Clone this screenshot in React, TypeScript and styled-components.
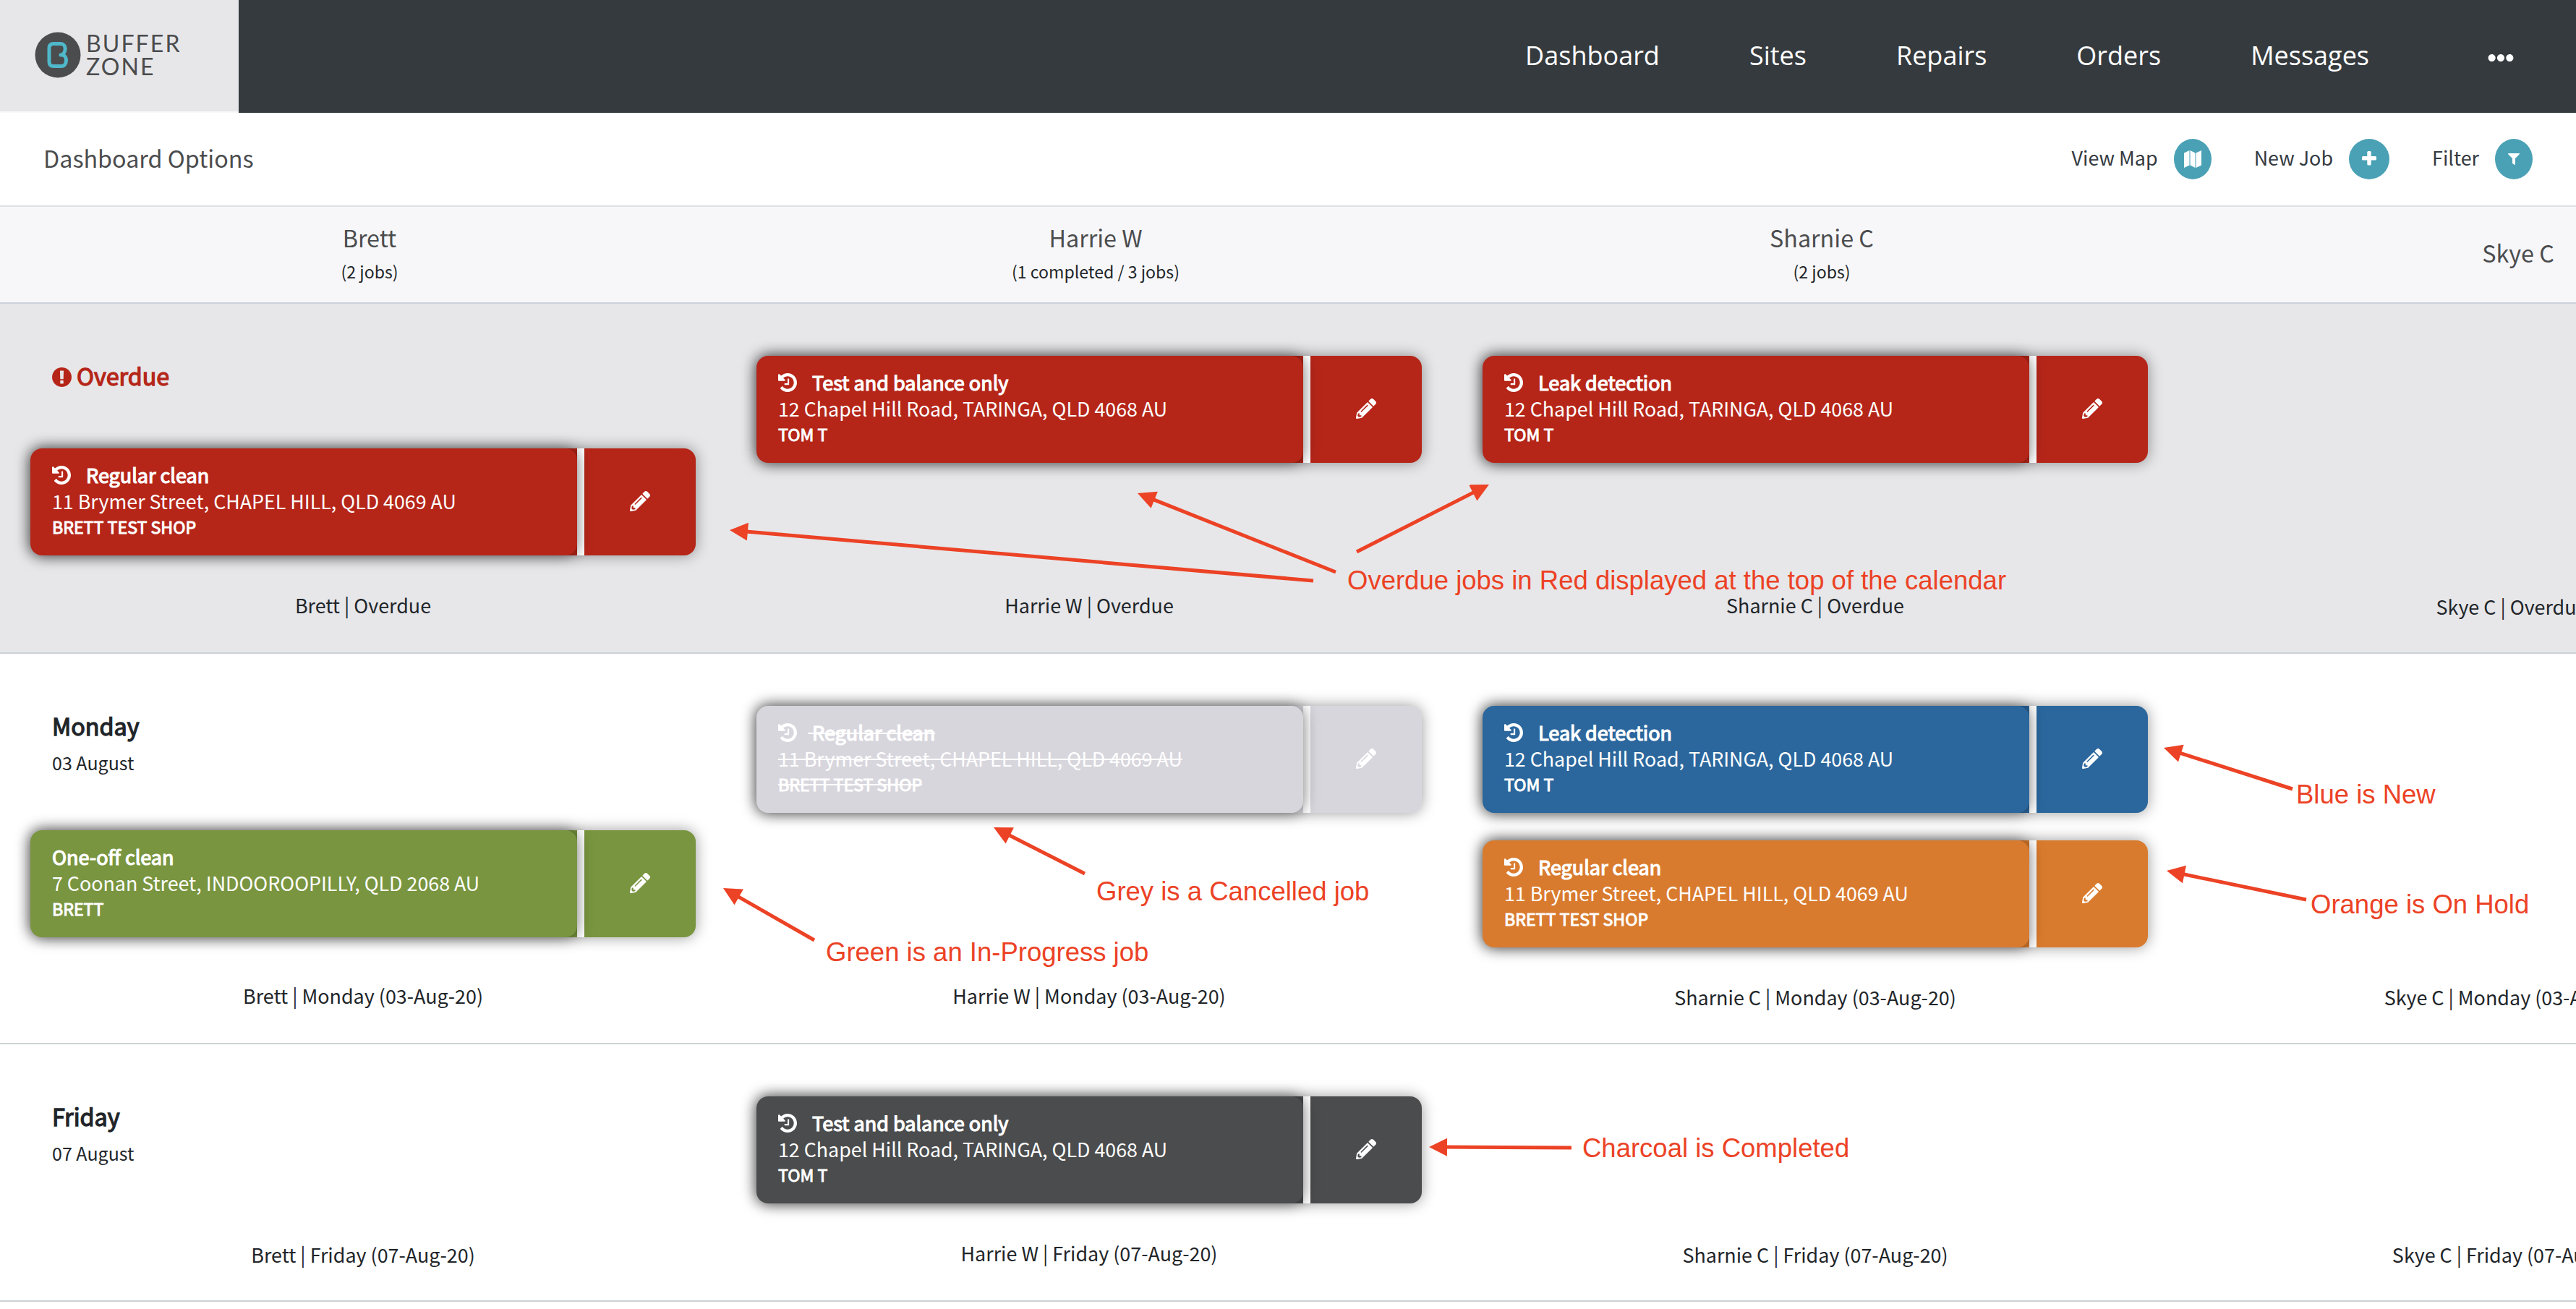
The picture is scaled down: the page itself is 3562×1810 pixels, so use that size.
import React from "react";
import styled, { createGlobalStyle } from "styled-components";
import { FaFilter, FaEllipsisH, FaPencilAlt } from "react-icons/fa";

type Status = "overdue" | "new" | "hold" | "progress" | "cancelled" | "completed";

interface Job {
  title: string;
  address: string;
  client: string;
  status: Status;
  recurring?: boolean;
}

interface DayCell {
  caption: string;
  jobs: Job[];
}

interface Day {
  name: string;
  date?: string;
  height: number;
  cells: DayCell[];
}

const colours: Record<Status, string> = {
  overdue: "#b52619",
  new: "#2b679d",
  hold: "#d97b2e",
  progress: "#79953f",
  cancelled: "#d8d6dd",
  completed: "#4b4c4d",
};

const GlobalStyle = createGlobalStyle`
  * {
    box-sizing: border-box;
  }
  body {
    margin: 0;
    background: #fff;
    color: #212529;
    font-family: "Noto Sans CJK SC", "Noto Sans", sans-serif;
    overflow: hidden;
  }
`;

const Page = styled.div`
  position: relative;
  width: 3562px;
  height: 1810px;
  overflow: hidden;
`;

const Header = styled.header`
  display: flex;
  align-items: center;
  height: 156px;
  background: #353a3e;
`;

const Brand = styled.div`
  display: flex;
  align-items: center;
  width: 330px;
  height: 156px;
  padding: 0 0 2px 48px;
  background: #e7e7e9;
  border-bottom: 2px solid #f8f8f8;
`;

const BrandName = styled.div`
  margin-left: 7px;
  color: #4b4c4e;
  font: 32px/32px Lato, sans-serif;
  letter-spacing: 2.1px;
`;

const Nav = styled.nav`
  display: flex;
  flex: 1;
  justify-content: flex-end;
  align-items: center;
  gap: 124px;
  padding-right: 86px;
`;

const NavLink = styled.a`
  padding-bottom: 2px;
  color: #fff;
  font: 36px/50px "Open Sans", sans-serif;
`;

const MoreIcon = styled(FaEllipsisH)`
  width: 36px;
  height: 36px;
  margin: 4px 0 0 40px;
  color: #fff;
`;

const Toolbar = styled.div`
  display: flex;
  align-items: center;
  justify-content: space-between;
  height: 130px;
  padding: 0 60px;
  border-bottom: 2px solid #dee2e6;
`;

const ToolbarTitle = styled.div`
  padding-bottom: 4px;
  color: #4b4c4e;
  font-size: 32.3px;
  line-height: 50px;
`;

const Actions = styled.div`
  display: flex;
  gap: 59px;
`;

const Action = styled.div`
  display: flex;
  align-items: center;
  gap: 22px;
`;

const ActionLabel = styled.span`
  padding-bottom: 5px;
  color: #343a40;
  font-size: 26.9px;
  line-height: 42px;
`;

const RoundButton = styled.span<{ $width: number }>`
  display: flex;
  align-items: center;
  justify-content: center;
  width: ${(props) => props.$width}px;
  height: 56px;
  border-radius: 50%;
  background: #4aa1b5;
  color: #fff;
`;

const People = styled.div`
  display: flex;
  height: 134px;
  padding-left: 9px;
  background: #f7f7f9;
  border-bottom: 2px solid #ced2d8;
`;

const Person = styled.div<{ $width: number }>`
  display: flex;
  flex: none;
  flex-direction: column;
  align-items: center;
  justify-content: center;
  width: ${(props) => props.$width}px;
  padding-bottom: 3px;
  color: #4b4c4e;
  font-size: 32.3px;
  line-height: 49px;

  &:last-child {
    padding-bottom: 6px;
  }
`;

const JobCount = styled.small`
  color: #212529;
  font-size: 23.1px;
  line-height: 45px;
`;

const DayRow = styled.section<{ $height: number; $overdue: boolean }>`
  display: flex;
  height: ${(props) => props.$height}px;
  background: ${(props) => (props.$overdue ? "#e7e7e9" : "#fff")};
  border-bottom: 2px solid #ced2d5;
`;

const Column = styled.div<{ $width: number }>`
  display: flex;
  flex: none;
  flex-direction: column;
  width: ${(props) => props.$width}px;
  padding: 72px 42px 40px;
`;

const DayLabel = styled.div<{ $overdue: boolean }>`
  display: flex;
  align-items: center;
  gap: 7px;
  height: 58px;
  margin-left: 30px;
  color: ${(props) => (props.$overdue ? "#b52619" : "#212529")};
  font-size: 32.3px;
  -webkit-text-stroke: 1.3px currentColor;

  span {
    padding-bottom: 5px;
  }
`;

const DateLabel = styled.div`
  height: 44px;
  margin-left: 30px;
  font-size: 25px;
  line-height: 41px;
`;

const Jobs = styled.div<{ $offset: number }>`
  display: flex;
  flex-direction: column;
  gap: 38px;
  margin-top: ${(props) => props.$offset}px;
`;

const Card = styled.article<{ $status: Status }>`
  display: flex;
  height: 148px;
  border-radius: 16px;
  background: ${(props) => colours[props.$status]};
  box-shadow: 0 0 20px rgba(0, 0, 0, 0.4);
  color: #fff;
`;

const CardBody = styled.div<{ $cancelled: boolean }>`
  position: relative;
  flex: 1;
  padding: 19px 30px 0;
  border-radius: 16px;
  box-shadow: 0 0 20px rgba(0, 0, 0, 0.55);
  text-decoration: ${(props) => (props.$cancelled ? "line-through 2px" : "none")};
`;

const CardTitle = styled.div`
  display: flex;
  align-items: center;
  gap: 15px;
  height: 36px;
  font-size: 27px;

  span {
    padding-bottom: 2px;
    -webkit-text-stroke: 1.2px currentColor;
  }
`;

const Address = styled.div`
  font-size: 26.8px;
  line-height: 36px;
`;

const Client = styled.div`
  font-size: 23.2px;
  line-height: 34px;
  -webkit-text-stroke: 1px currentColor;
`;

const EditButton = styled.div`
  display: flex;
  align-items: center;
  justify-content: center;
  width: 164px;
  padding-bottom: 2px;
  border-left: 10px solid #fff;
`;

const Caption = styled.div<{ $low: boolean }>`
  margin-top: auto;
  padding-bottom: ${(props) => (props.$low ? 2 : 4)}px;
  text-align: center;
  font-size: 26.9px;
  line-height: 42px;
  white-space: nowrap;
`;

const Notes = styled.div`
  position: absolute;
  inset: 0;
`;

const Arrows = styled.svg`
  position: absolute;
  inset: 0;
  fill: #ec4225;
  stroke: #ec4225;
`;

const Note = styled.div<{ $x: number; $y: number }>`
  position: absolute;
  left: ${(props) => props.$x}px;
  top: ${(props) => props.$y}px;
  color: #ec4225;
  font: 36.5px/42px "Liberation Sans", sans-serif;
  white-space: nowrap;
`;

const columnWidths = [1004, 1004, 1004, 922];

const people = [
  { name: "Brett", jobs: "(2 jobs)" },
  { name: "Harrie W", jobs: "(1 completed / 3 jobs)" },
  { name: "Sharnie C", jobs: "(2 jobs)" },
  { name: "Skye C" },
];

const brymer = { address: "11 Brymer Street, CHAPEL HILL, QLD 4069 AU", client: "BRETT TEST SHOP", recurring: true };
const chapel = { address: "12 Chapel Hill Road, TARINGA, QLD 4068 AU", client: "TOM T", recurring: true };

const days: Day[] = [
  {
    name: "Overdue",
    height: 484,
    cells: [
      { caption: "Brett | Overdue", jobs: [{ title: "Regular clean", status: "overdue", ...brymer }] },
      { caption: "Harrie W | Overdue", jobs: [{ title: "Test and balance only", status: "overdue", ...chapel }] },
      { caption: "Sharnie C | Overdue", jobs: [{ title: "Leak detection", status: "overdue", ...chapel }] },
      { caption: "Skye C | Overdue", jobs: [] },
    ],
  },
  {
    name: "Monday",
    date: "03 August",
    height: 540,
    cells: [
      {
        caption: "Brett | Monday (03-Aug-20)",
        jobs: [
          {
            title: "One-off clean",
            address: "7 Coonan Street, INDOOROOPILLY, QLD 2068 AU",
            client: "BRETT",
            status: "progress",
          },
        ],
      },
      { caption: "Harrie W | Monday (03-Aug-20)", jobs: [{ title: "Regular clean", status: "cancelled", ...brymer }] },
      {
        caption: "Sharnie C | Monday (03-Aug-20)",
        jobs: [
          { title: "Leak detection", status: "new", ...chapel },
          { title: "Regular clean", status: "hold", ...brymer },
        ],
      },
      { caption: "Skye C | Monday (03-Aug-20)", jobs: [] },
    ],
  },
  {
    name: "Friday",
    date: "07 August",
    height: 356,
    cells: [
      { caption: "Brett | Friday (07-Aug-20)", jobs: [] },
      { caption: "Harrie W | Friday (07-Aug-20)", jobs: [{ title: "Test and balance only", status: "completed", ...chapel }] },
      { caption: "Sharnie C | Friday (07-Aug-20)", jobs: [] },
      { caption: "Skye C | Friday (07-Aug-20)", jobs: [] },
    ],
  },
];

const notes = [
  { text: "Overdue jobs in Red displayed at the top of the calendar", x: 1863, y: 782 },
  { text: "Grey is a Cancelled job", x: 1516, y: 1212 },
  { text: "Green is an In-Progress job", x: 1142, y: 1296 },
  { text: "Blue is New", x: 3175, y: 1078 },
  { text: "Orange is On Hold", x: 3195, y: 1230 },
  { text: "Charcoal is Completed", x: 2188, y: 1567 },
];

// tail x, tail y, tip x, tip y
const arrows = [
  [1816, 803, 1009, 733],
  [1847, 791, 1573, 682],
  [1876, 763, 2059, 670],
  [1500, 1208, 1374, 1144],
  [1126, 1300, 1000, 1228],
  [3170, 1091, 2992, 1034],
  [3189, 1244, 2996, 1204],
  [2173, 1587, 1976, 1586],
];

const Arrow = ({ points }: { points: number[] }) => {
  const [x1, y1, x2, y2] = points;
  const angle = (Math.atan2(y2 - y1, x2 - x1) * 180) / Math.PI;
  const length = Math.hypot(x2 - x1, y2 - y1);
  return (
    <g transform={`translate(${x1} ${y1}) rotate(${angle})`}>
      <line x1={0} y1={0} x2={length - 20} y2={0} strokeWidth={5} />
      <path d={`M${length} 0l-25 -12.500v25z`} stroke="none" />
    </g>
  );
};

const HistoryIcon = () => (
  <svg width="26" height="26" viewBox="0 128 1536 1536" fill="currentColor">
    <path d="M1536 896q0 156-61 298t-164 245-245 164-298 61q-172 0-327-72.500t-264-204.500q-7-10-6.500-22.500t8.500-20.500l137-138q10-9 25-9 16 2 23 12 73 95 179 147t225 52q104 0 198.500-40.500t163.500-109.500 109.500-163.500 40.500-198.500-40.500-198.500-109.500-163.500-163.500-109.500-198.500-40.500q-98 0-188 35.500t-160 101.500l137 138q31 30 14 69-17 40-59 40h-448q-26 0-45-19t-19-45v-448q0-42 40-59 39-17 69 14l130 129q107-101 244.500-156.500t284.500-55.500q156 0 298 61t245 164 164 245 61 298zm-640-288v448q0 14-9 23t-23 9h-320q-14 0-23-9t-9-23v-64q0-14 9-23t23-9h224v-352q0-14 9-23t23-9h64q14 0 23 9t9 23z" />
  </svg>
);

const AlertIcon = () => (
  <svg width="27" height="27" viewBox="128 128 1536 1536" fill="currentColor" stroke="none">
    <path d="M896 128q209 0 385.500 103t279.500 279.500 103 385.500-103 385.500-279.500 279.500-385.500 103-385.500-103-279.500-279.500-103-385.500 103-385.500 279.500-279.500 385.500-103zm128 1247v-190q0-14-9-23.500t-22-9.500h-192q-13 0-23 10t-10 23v190q0 13 10 23t23 10h192q13 0 22-9.500t9-23.500zm-2-344l18-621q0-12-10-18-10-8-24-8h-220q-14 0-24 8-10 6-10 18l17 621q0 10 10 17.500t24 7.500h185q14 0 23.500-7.500t10.500-17.500z" />
  </svg>
);

const MapIcon = () => (
  <svg width="24" height="24" viewBox="0 0 24 24" fill="currentColor">
    <path d="M0 3.500L7.500 0v20.500L0 24zM8.500 0l7 3.500V24l-7-3.500zM16.500 3.500L24 0v20.500L16.500 24z" />
  </svg>
);

const PlusIcon = () => (
  <svg width="20" height="22" viewBox="0 0 20 22" fill="currentColor">
    <rect x="7.300" y="0" width="5.400" height="19.500" rx="1.500" />
    <rect x="0" y="7" width="20" height="5.400" rx="1.500" />
  </svg>
);

const JobCard = ({ job }: { job: Job }) => (
  <Card $status={job.status}>
    <CardBody $cancelled={job.status === "cancelled"}>
      <CardTitle>
        {job.recurring && <HistoryIcon />}
        <span>
          {job.recurring && "\u00a0"}
          {job.title}
        </span>
      </CardTitle>
      <Address>{job.address}</Address>
      <Client>{job.client}</Client>
    </CardBody>
    <EditButton>
      <FaPencilAlt size={28} />
    </EditButton>
  </Card>
);

const App = () => {
  const renderDay = (day: Day) => {
    const overdue = day.name === "Overdue";
    return (
      <DayRow key={day.name} $height={day.height} $overdue={overdue}>
        {day.cells.map((cell, index) => (
          <Column key={cell.caption} $width={columnWidths[index]}>
            {index === 0 && (
              <DayLabel $overdue={overdue}>
                {overdue && <AlertIcon />}
                <span>{day.name}</span>
              </DayLabel>
            )}
            {index === 0 && day.date && <DateLabel>{day.date}</DateLabel>}
            <Jobs $offset={index === 0 ? 70 : 0}>
              {cell.jobs.map((job) => (
                <JobCard key={job.title} job={job} />
              ))}
            </Jobs>
            <Caption $low={cell.jobs.length !== 1}>{cell.caption}</Caption>
          </Column>
        ))}
      </DayRow>
    );
  };

  return (
    <>
      <GlobalStyle />
      <Page>
        <Header>
          <Brand>
            <svg width="64" height="64" viewBox="0 0 64 64">
              <circle cx="32" cy="32" r="31.500" fill="#4b4c4e" />
              <path
                d="M36 32H38C46 33 45 47.500 37 47.500H26Q20 47.500 20 41.500V22.500Q20 16.500 26 16.500H36C44 16.500 44 29 37 32"
                fill="none"
                stroke="#4fb8ca"
                strokeWidth="5"
                strokeLinecap="round"
              />
            </svg>
            <BrandName>
              BUFFER
              <br />
              ZONE
            </BrandName>
          </Brand>
          <Nav>
            <NavLink>Dashboard</NavLink>
            <NavLink>Sites</NavLink>
            <NavLink>Repairs</NavLink>
            <NavLink>Orders</NavLink>
            <NavLink>Messages</NavLink>
            <MoreIcon />
          </Nav>
        </Header>
        <Toolbar>
          <ToolbarTitle>Dashboard Options</ToolbarTitle>
          <Actions>
            <Action>
              <ActionLabel>View Map</ActionLabel>
              <RoundButton $width={52}>
                <MapIcon />
              </RoundButton>
            </Action>
            <Action>
              <ActionLabel>New Job</ActionLabel>
              <RoundButton $width={56}>
                <PlusIcon />
              </RoundButton>
            </Action>
            <Action>
              <ActionLabel>Filter</ActionLabel>
              <RoundButton $width={52}>
                <FaFilter size={16} />
              </RoundButton>
            </Action>
          </Actions>
        </Toolbar>
        <People>
          {people.map((person, index) => (
            <Person key={person.name} $width={columnWidths[index]}>
              {person.name}
              {person.jobs && <JobCount>{person.jobs}</JobCount>}
            </Person>
          ))}
        </People>
        {days.map(renderDay)}
        <Notes>
          <Arrows width="3562" height="1810">
            {arrows.map((points) => (
              <Arrow key={points.join()} points={points} />
            ))}
          </Arrows>
          {notes.map((note) => (
            <Note key={note.text} $x={note.x} $y={note.y}>
              {note.text}
            </Note>
          ))}
        </Notes>
      </Page>
    </>
  );
};

export default App;
